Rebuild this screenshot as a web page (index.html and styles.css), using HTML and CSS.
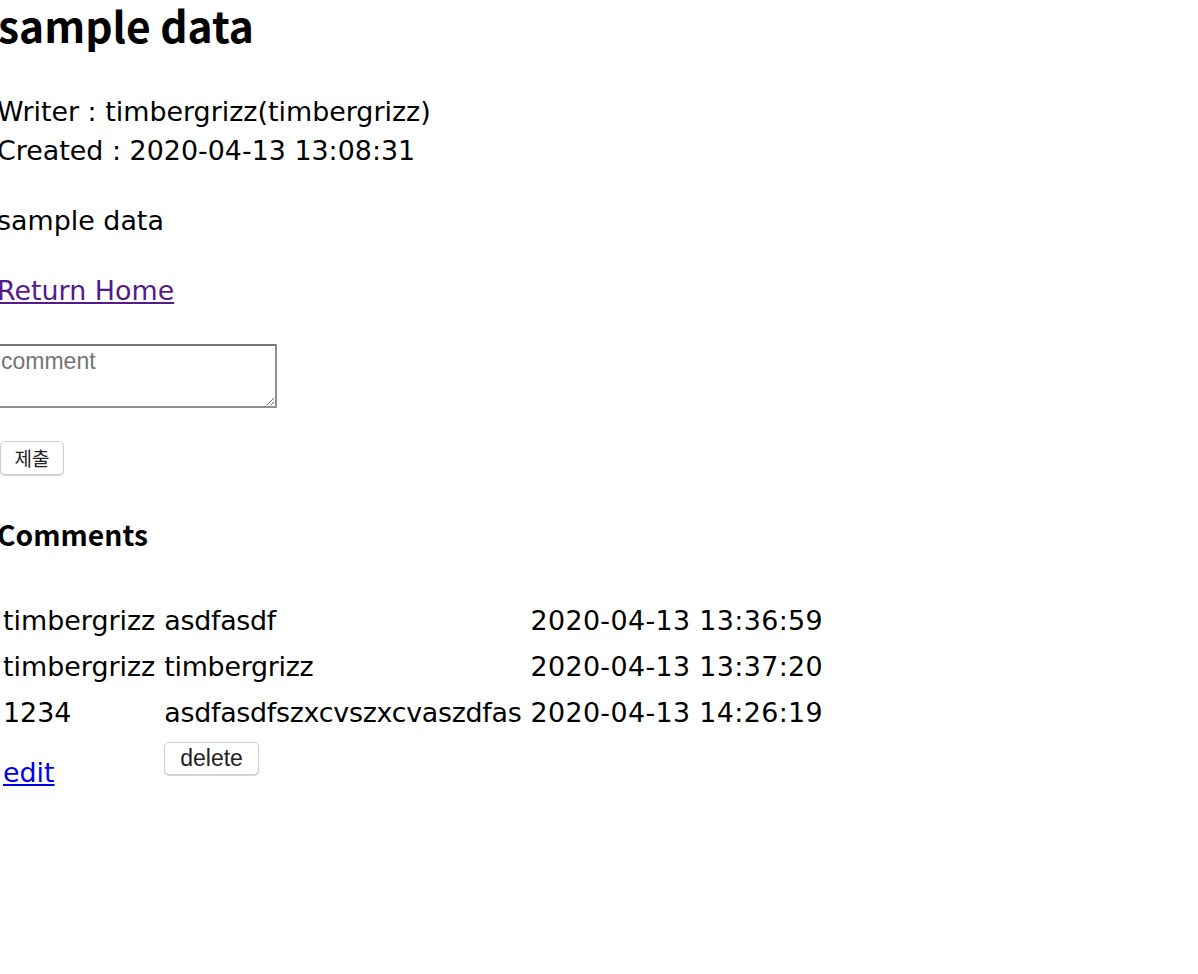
FILE: index.html
```html
<!DOCTYPE html>
<html>
<head>
<meta charset="utf-8">
<link rel="stylesheet" href="styles.css">
</head>
<body>
<div class="page">
  <h1 class="title">sample data</h1>
  <p class="meta">Writer : timbergrizz(timbergrizz)<br>Created : 2020-04-13 13:08:31</p>
  <p class="content">sample data</p>
  <p class="home"><a class="home-link" href="#">Return Home</a></p>
  <form class="comment-form">
    <textarea class="comment-input" placeholder="comment"></textarea>
    <div class="submit-row"><button class="btn btn-submit" type="button">제출</button></div>
  </form>
  <h3 class="comments-title">Comments</h3>
  <table class="comments">
    <tr><td>timbergrizz</td><td class="msg">asdfasdf</td><td class="date">2020-04-13 13:36:59</td></tr>
    <tr><td>timbergrizz</td><td class="msg">timbergrizz</td><td class="date">2020-04-13 13:37:20</td></tr>
    <tr><td>1234</td><td class="msg">asdfasdfszxcvszxcvaszdfas</td><td class="date">2020-04-13 14:26:19</td></tr>
    <tr class="actions"><td><a class="edit-link" href="#">edit</a></td><td><button class="btn btn-delete" type="button">delete</button></td><td></td></tr>
  </table>
</div>
</body>
</html>
```

FILE: styles.css
```css
html, body {
  margin: 0;
  padding: 0;
  background: #fff;
}
body {
  font-family: "DejaVu Sans", "Noto Sans CJK KR", sans-serif;
  font-size: 26.9px;
  color: #000;
}
.page {
  margin-left: -3px;
}
.title {
  font-family: "Noto Sans CJK KR", sans-serif;
  font-size: 42.5px;
  font-weight: bold;
  line-height: 50px;
  margin: 0;
  padding-left: 1px;
}
.meta {
  margin: 42px 0 0;
  line-height: 39px;
}
.content {
  margin: 31px 0 0;
  line-height: 39px;
}
.home {
  margin: 31px 0 0;
  line-height: 39px;
}
.home-link {
  color: #551a8b;
}
.comment-form {
  margin: 34px 0 0;
}
.comment-input {
  display: block;
  width: 272px;
  height: 56px;
  margin: 0;
  padding: 2px;
  border: 2px solid #8f8f8f;
  border-top-color: #767676;
  font-family: "Liberation Sans", sans-serif;
  font-size: 23px;
  box-sizing: content-box;
  resize: both;
}
.comment-input::placeholder {
  color: #757575;
}
.submit-row {
  display: flex;
  margin-top: 33px;
}
.btn {
  font-family: "Liberation Sans", "Noto Sans CJK KR", sans-serif;
  background: #fff;
  border: 1px solid #cfcfcf;
  border-radius: 5px;
  box-shadow: 0 1px 1px rgba(0,0,0,0.18);
  color: #222;
  margin: 0;
}
.btn-submit {
  font-family: "Noto Sans CJK KR", sans-serif;
  font-size: 19px;
  line-height: 24px;
  padding: 4px 13.5px;
  margin-left: 3px;
}
.comments-title {
  font-family: "Noto Sans CJK KR", sans-serif;
  font-size: 28.3px;
  font-weight: bold;
  margin: 39px 0 0;
  line-height: 40px;
}
.comments {
  margin-top: 42px;
  border-spacing: 3px;
}
.comments td {
  padding: 3px;
  line-height: 37px;
  white-space: nowrap;
}
.comments .msg {
  letter-spacing: -0.28px;
}
.comments .date {
  letter-spacing: 0.37px;
}
.edit-link {
  color: #0000ee;
}
.actions td {
  vertical-align: top;
}
.btn-delete {
  display: block;
  font-size: 23px;
  line-height: 25px;
  padding: 3px 15px;
  margin-top: 2px;
}
.actions .edit-link {
  display: inline-block;
  margin-top: 14px;
}
```
